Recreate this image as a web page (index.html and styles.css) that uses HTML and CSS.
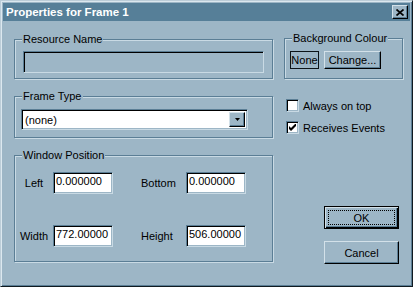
FILE: index.html
```html
<!DOCTYPE html>
<html lang="en">
<head>
    <meta charset="UTF-8">
    <title>Properties for Frame 1</title>
    <link rel="stylesheet" href="styles.css">
</head>
<body>

    <div class="window">
        <div class="titlebar">
            <span class="title">Properties for Frame 1</span>
            <div class="close-btn">
                <svg width="8" height="7" viewBox="0 0 8 7">
                    <path d="M0.5 0.5 L7.5 6.5 M7.5 0.5 L0.5 6.5" stroke="#000" stroke-width="1.7" fill="none"/>
                </svg>
            </div>
        </div>

        <div class="dialog">
            <div class="col-left">
                <div class="group group-resource">
                    <span class="caption">Resource Name</span>
                    <div class="edit edit-disabled resource-edit"></div>
                </div>

                <div class="group group-frame">
                    <span class="caption">Frame Type</span>
                    <div class="combo">
                        <span class="combo-text">(none)</span>
                        <span class="combo-btn">
                            <svg width="5" height="3" viewBox="0 0 5 3">
                                <path d="M0 0 H5 L2.5 3 Z" fill="#000"/>
                            </svg>
                        </span>
                    </div>
                </div>

                <div class="group group-position">
                    <span class="caption">Window Position</span>
                    <div class="pos-grid">
                        <span class="pos-label">Left</span>
                        <div class="edit">0.000000</div>
                        <span class="pos-label pos-label-right">Bottom</span>
                        <div class="edit">0.000000</div>
                        <span class="pos-label">Width</span>
                        <div class="edit">772.00000</div>
                        <span class="pos-label pos-label-right">Height</span>
                        <div class="edit">506.00000</div>
                    </div>
                </div>
            </div>

            <div class="col-right">
                <div class="group group-colour">
                    <span class="caption">Background Colour</span>
                    <div class="colour-row">
                        <span class="swatch">None</span>
                        <div class="btn btn-change">Change...</div>
                    </div>
                </div>

                <div class="check-list">
                    <div class="check">
                        <span class="check-box"></span>
                        <span class="check-label">Always on top</span>
                    </div>
                    <div class="check">
                        <span class="check-box">
                            <svg width="7" height="7" viewBox="0 0 7 7">
                                <path d="M0 2 L2 4 L6 0 L7 0 L7 2 L2 7 L0 5 Z" fill="#000"/>
                            </svg>
                        </span>
                        <span class="check-label">Receives Events</span>
                    </div>
                </div>

                <div class="buttons">
                    <div class="btn btn-default"><span class="focus">OK</span></div>
                    <div class="btn btn-cancel">Cancel</div>
                </div>
            </div>
        </div>
    </div>

</body>
</html>
```

FILE: styles.css
```css
body {
    margin: 0;
    padding: 0;
    font-family: "Liberation Sans", Arial, sans-serif;
    font-size: 11px;
    color: #000;
    background-color: #9db6c6;
}
.window {
    width: 413px;
    height: 287px;
    box-sizing: border-box;
    padding: 2px;
    display: flex;
    flex-direction: column;
    background-color: #9db6c6;
    border: 1px solid;
    border-color: #bccdd8 #101a20 #101a20 #bccdd8;
    box-shadow: inset 1px 1px 0 #dce8ef, inset -1px -1px 0 #5b7e95;
}

/* title bar */
.titlebar {
    height: 18px;
    display: flex;
    align-items: center;
    padding: 0 2px 0 3px;
    background-color: #567f98;
}
.title {
    color: #fff;
    font-weight: bold;
    font-size: 11.5px;
}
.close-btn {
    width: 16px;
    height: 14px;
    box-sizing: border-box;
    margin-left: auto;
    display: flex;
    align-items: center;
    justify-content: center;
    background-color: #9db6c6;
    border: 1px solid;
    border-color: #d3e1e9 #000 #000 #d3e1e9;
    box-shadow: inset -1px -1px 0 #5b7e95;
}

/* dialog layout */
.dialog {
    flex: 1;
    display: flex;
    padding-left: 11px;
}
.col-left {
    width: 259px;
    display: flex;
    flex-direction: column;
}
.col-right {
    width: 119px;
    margin-left: 11px;
    display: flex;
    flex-direction: column;
}

/* etched group boxes */
.group {
    box-sizing: border-box;
    border: 1px solid #5b7e95;
    box-shadow: inset 1px 1px 0 #c9dae4, 1px 1px 0 #c9dae4;
}
.caption {
    display: block;
    width: fit-content;
    height: 13px;
    line-height: 13px;
    margin: -7px 0 -6px 7px;
    padding: 0 1px;
    background-color: #9db6c6;
}
.group-resource {
    margin-top: 18px;
    height: 40px;
}
.group-frame {
    margin-top: 17px;
    height: 42px;
}
.group-position {
    margin-top: 17px;
    height: 107px;
}
.group-colour {
    margin-top: 17px;
    height: 41px;
}

/* sunken fields */
.edit, .combo {
    box-sizing: border-box;
    background-color: #fff;
    border: 1px solid;
    border-color: #5b7e95 #c9dae4 #c9dae4 #5b7e95;
    box-shadow: inset 1px 1px 0 #000, inset -1px -1px 0 #9db6c6;
}
.edit {
    height: 22px;
    padding: 2px 0 0 2px;
    line-height: 13px;
    white-space: nowrap;
    overflow: hidden;
}
.edit-disabled {
    background-color: #9db6c6;
}
.resource-edit {
    width: 241px;
    margin: 11px 0 0 8px;
}
.combo {
    width: 227px;
    height: 21px;
    margin: 12px 0 0 6px;
    display: flex;
    align-items: stretch;
    padding: 2px;
}
.combo-text {
    flex: 1;
    padding-left: 1px;
    line-height: 17px;
}
.combo-btn {
    width: 16px;
    box-sizing: border-box;
    display: flex;
    align-items: center;
    justify-content: center;
    background-color: #9db6c6;
    border: 1px solid;
    border-color: #d3e1e9 #000 #000 #d3e1e9;
    box-shadow: inset -1px -1px 0 #5b7e95;
}

.pos-grid {
    margin-top: 16px;
    display: grid;
    grid-template-columns: 38px 60px 73px 60px;
    grid-template-rows: 22px 22px;
    row-gap: 31px;
    align-items: center;
}
.pos-grid .edit {
    height: 22px;
    align-self: stretch;
}
.pos-label {
    text-align: center;
}
.pos-label-right {
    text-align: left;
    padding-left: 28px;
}

/* background colour */
.colour-row {
    display: flex;
    margin: 12px 0 0 5px;
    gap: 5px;
}
.swatch {
    width: 29px;
    height: 18px;
    box-sizing: border-box;
    border: 1px solid #0c1418;
    display: flex;
    align-items: center;
    justify-content: center;
}

/* raised buttons */
.btn {
    box-sizing: border-box;
    display: flex;
    align-items: center;
    justify-content: center;
    background-color: #9db6c6;
    border: 1px solid;
    border-color: #d3e1e9 #000 #000 #d3e1e9;
    box-shadow: inset -1px -1px 0 #5b7e95;
}
.btn-change {
    width: 57px;
    height: 18px;
}
.buttons {
    margin: 72px 0 0 40px;
    display: flex;
    flex-direction: column;
    gap: 12px;
}
.btn-default, .btn-cancel {
    width: 75px;
    height: 23px;
}
.btn-default {
    padding: 3px;
    align-items: stretch;
    border-color: #000;
    box-shadow: inset 1px 1px 0 #d3e1e9, inset -1px -1px 0 #000, inset -2px -2px 0 #5b7e95;
}
.focus {
    flex: 1;
    display: flex;
    align-items: center;
    justify-content: center;
    border: 1px dotted #000;
}

/* checkboxes */
.check-list {
    margin: 20px 0 0 2px;
    display: flex;
    flex-direction: column;
    gap: 9px;
}
.check {
    height: 13px;
    display: flex;
    align-items: center;
}
.check-box {
    width: 13px;
    height: 13px;
    box-sizing: border-box;
    display: flex;
    align-items: center;
    justify-content: center;
    background-color: #fff;
    border: 1px solid;
    border-color: #5b7e95 #c9dae4 #c9dae4 #5b7e95;
    box-shadow: inset 1px 1px 0 #000, inset -1px -1px 0 #9db6c6;
}
.check-label {
    margin-left: 4px;
}
```
